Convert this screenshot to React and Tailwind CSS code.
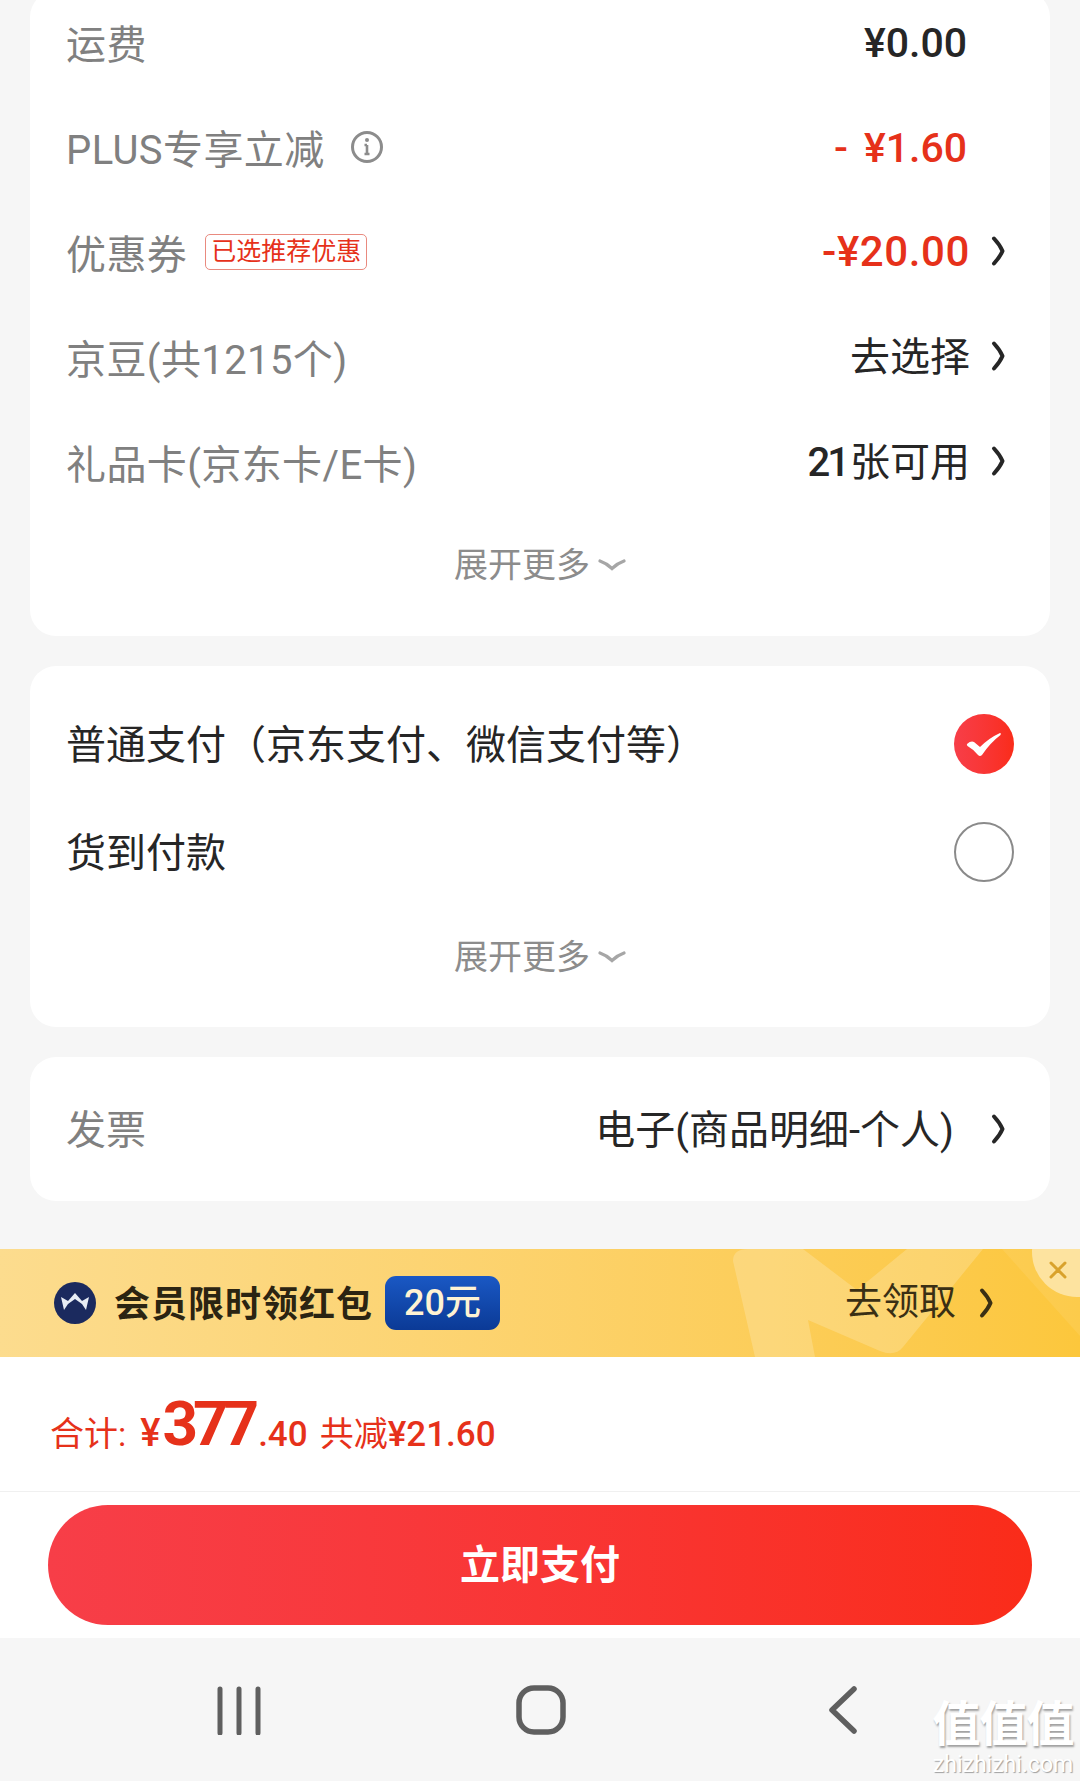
function Arrow({ className = 'w-[16px] h-[32px] text-[#262626]' }) {
  return (
    <svg viewBox="0 0 16 32" className={className} fill="none" stroke="currentColor" strokeWidth="4" strokeLinecap="round" strokeLinejoin="round">
      <path d="M4 3.5 Q10 10 12.5 16 Q10 22 4 28.5" />
    </svg>
  );
}

function ExpandMore() {
  return (
    <div className="flex items-center justify-center gap-[8px] text-[34px] text-[#8c8c8c]">
      <span>展开更多</span>
      <svg viewBox="0 0 28 14" className="w-[28px] h-[14px] text-[#a6a6a6]" fill="none" stroke="currentColor" strokeWidth="3.2" strokeLinecap="round">
        <path d="M2 3 Q8 5 14 10.5 Q20 5 26 3" />
      </svg>
    </div>
  );
}

function PriceRow({ label, extra, value, valueClass = 'text-[40px] text-[#262626] -translate-y-[1px]', arrow = true }) {
  return (
    <div className="h-[105px] flex items-center justify-between pl-[36px] pr-[44px]">
      <div className="flex items-center text-[40px] tracking-[0.4px] text-[#808080]">
        <span className="translate-y-[2px]">{label}</span>
        {extra}
      </div>
      <div className="flex items-center">
        <span className={valueClass}>{value}</span>
        <span className={arrow ? 'ml-[20px] w-[16px] -translate-y-[3px]' : 'ml-[23px] w-[16px] invisible'}><Arrow /></span>
      </div>
    </div>
  );
}

function NavIcons() {
  return (
    <div className="h-[143px] bg-[#f6f6f6] flex items-center relative">
      <svg viewBox="0 0 50 50" className="absolute left-[214px] top-[47px] w-[50px] h-[50px] text-[#5f5f5f]" fill="none" stroke="currentColor" strokeWidth="5" strokeLinecap="round">
        <path d="M6 4v44M25 4v44M44 4v44" />
      </svg>
      <svg viewBox="0 0 50 50" className="absolute left-[516px] top-[47px] w-[50px] h-[50px] text-[#5f5f5f]" fill="none" stroke="currentColor" strokeWidth="5.5">
        <rect x="3" y="3" width="44" height="44" rx="15" />
      </svg>
      <svg viewBox="0 0 32 50" className="absolute left-[827px] top-[47px] w-[32px] h-[50px] text-[#5f5f5f]" fill="none" stroke="currentColor" strokeWidth="5.5" strokeLinecap="round" strokeLinejoin="round">
        <path d="M27 4 L5 25 L27 46" />
      </svg>
      <div className="absolute left-[930px] top-[63px] w-[146px] text-center leading-none">
        <div className="text-[48px] font-bold text-white tracking-[-1px] [text-shadow:1px_2px_2px_#a0a0a0]">值值值</div>
        <div className="mt-[4px] text-[23px] text-white [text-shadow:1px_1px_1px_#a0a0a0]">zhizhizhi.com</div>
      </div>
    </div>
  );
}

export default function App() {
  return (
    <div className="w-[1080px] h-[1781px] overflow-hidden bg-[#f6f6f6] font-['Roboto','Noto_Sans_CJK_SC',sans-serif]">
      <div className="mx-[30px] -mt-[9px] bg-white rounded-[26px]">
        <PriceRow label="运费" value="¥0.00" valueClass="text-[41px] text-[#262626] font-medium" arrow={false} />
        <PriceRow
          label="PLUS专享立减"
          value={<><span className="mr-[16px]">-</span>¥1.60</>}
          valueClass="text-[41px] text-[#e6311a] font-medium"
          arrow={false}
          extra={
            <svg viewBox="0 0 34 34" className="ml-[25px] w-[34px] h-[34px] -translate-y-[2px] text-[#8c8c8c]" fill="none" stroke="currentColor" strokeWidth="3">
              <circle cx="17" cy="17" r="14.5" />
              <path d="M17 15v9M14.5 15h2.5M14.5 24h5" strokeWidth="2.6" />
              <circle cx="17" cy="10" r="2" fill="currentColor" stroke="none" />
            </svg>
          }
        />
        <PriceRow
          label="优惠券"
          value="-¥20.00"
          valueClass="text-[42px] tracking-[0.6px] text-[#e6311a] font-medium -translate-y-[2px]"
          extra={
            <span className="ml-[18px] -translate-y-[2px] h-[36px] w-[162px] flex items-center justify-center border border-[#e98a7f] rounded-[5px] text-[25px] tracking-normal text-[#e6311a] leading-none">
              已选推荐优惠
            </span>
          }
        />
        <PriceRow label="京豆(共1215个)" value="去选择" />
        <PriceRow label="礼品卡(京东卡/E卡)" value={<><span className="font-medium tracking-[-3px] mr-[3px]">21</span>张可用</>} />
        <div className="h-[98px] flex items-center justify-center"><ExpandMore /></div>
        <div className="h-[22px]" />
      </div>

      <div className="mx-[30px] mt-[30px] bg-white rounded-[26px] pt-[24px] pb-[21px]">
        <div className="h-[108px] flex items-center justify-between pl-[36px] pr-[36px] text-[40px] text-[#262626]">
          <span className="translate-y-[2px]">普通支付（京东支付、微信支付等）</span>
          <span className="w-[60px] h-[60px] rounded-full bg-gradient-to-r from-[#f73e48] to-[#fa2c19] flex items-center justify-center">
            <svg viewBox="0 0 36 26" className="w-[36px] h-[26px]" fill="#fff">
              <path d="M1 13 Q5 9.5 8 11 L14 16 Q23 7 34 2 Q35.5 2 34.5 4 Q24 12 16 24 Q14 26 12 24 Q7 18 1.5 15 Q0.5 14 1 13 Z" />
            </svg>
          </span>
        </div>
        <div className="h-[108px] flex items-center justify-between pl-[36px] pr-[36px] text-[40px] text-[#262626]">
          <span className="translate-y-[2px]">货到付款</span>
          <span className="w-[60px] h-[60px] rounded-full border-2 border-[#8a8a8a]" />
        </div>
        <div className="h-[100px] flex items-center justify-center translate-y-[1px]"><ExpandMore /></div>
      </div>

      <div className="mx-[30px] mt-[30px] h-[144px] bg-white rounded-[26px] flex items-center justify-between pl-[36px] pr-[44px]">
        <span className="text-[40px] text-[#808080] translate-y-[2px]">发票</span>
        <div className="flex items-center">
          <span className="text-[40px] text-[#262626] translate-y-[2px]">电子(商品明细-个人)</span>
          <span className="ml-[36px]"><Arrow /></span>
        </div>
      </div>

      <div className="relative mt-[48px] h-[108px] overflow-hidden bg-gradient-to-r from-[#fcdc8e] to-[#fcc73c] flex items-center justify-between pl-[54px] pr-[86px]">
        <svg viewBox="0 0 1080 108" className="absolute left-0 top-0 w-[1080px] h-[108px]" fill="#fff">
          <path fillOpacity="0.2" d="M733 12 Q733 0 748 0 L803 0 L857 41 L907 0 L983 0 L903 98 Q895 108 880 102 L808 71 L815 108 L755 108 Z" />
          <path fillOpacity="0.08" d="M1002 0 L1080 87 L1080 0 Z" />
        </svg>
        <div className="relative flex items-center">
          <svg viewBox="0 0 42 42" className="w-[42px] h-[42px] mr-[18px]">
            <circle cx="21" cy="21" r="21" fill="#1b2a5e" />
            <path d="M7 15 L14 19 L21 11 L28 19 L35 15 L32 28 L28 22 L21 17 L14 22 L10 28 Z" fill="#e8edf5" />
          </svg>
          <span className="text-[36px] font-bold text-[#2b2412] tracking-[1px] translate-y-[2px]">会员限时领红包</span>
          <span className="ml-[12px] h-[54px] w-[115px] rounded-[11px] bg-gradient-to-b from-[#1a58c4] to-[#0b3a96] flex items-center justify-center text-[36px] font-medium text-[#fff3d3]">
            20元
          </span>
        </div>
        <div className="relative flex items-center text-[#3a2f14]">
          <span className="text-[37px]">去领取</span>
          <span className="ml-[22px]"><Arrow className="w-[16px] h-[32px] text-[#3a2f14]" /></span>
        </div>
        <div className="absolute left-[1032px] -top-[42px] w-[90px] h-[90px] rounded-full bg-[#fde39f]" />
        <svg viewBox="0 0 18 18" className="absolute left-[1049px] top-[12px] w-[18px] h-[18px] text-[#d9a22c]" fill="none" stroke="currentColor" strokeWidth="3" strokeLinecap="round">
          <path d="M2 2 L16 16 M16 2 L2 16" />
        </svg>
      </div>

      <div className="bg-white">
        <div className="h-[135px] pl-[50px] flex items-end pb-[39px] border-b border-[#f0f0f0] text-[#e6311a] leading-none">
          <span className="text-[34px] mb-[1px]">合计:</span>
          <span className="ml-[14px] text-[38px] font-medium">¥</span>
          <span className="ml-[2px] text-[62px] font-bold tracking-[-5px] translate-y-[3px]">377</span>
          <span className="ml-[4px] text-[35px] font-medium">.40</span>
          <span className="ml-[12px] text-[34px] mb-[1px]">共减</span>
          <span className="text-[35px] font-medium">¥21.60</span>
        </div>
        <div className="h-[146px] px-[48px] pt-[13px]">
          <div className="h-[120px] rounded-full bg-gradient-to-r from-[#f73e48] to-[#fa2c19] flex items-center justify-center text-[40px] font-bold text-white">
            <span className="translate-y-[1px]">立即支付</span>
          </div>
        </div>
      </div>

      <NavIcons />
    </div>
  );
}
